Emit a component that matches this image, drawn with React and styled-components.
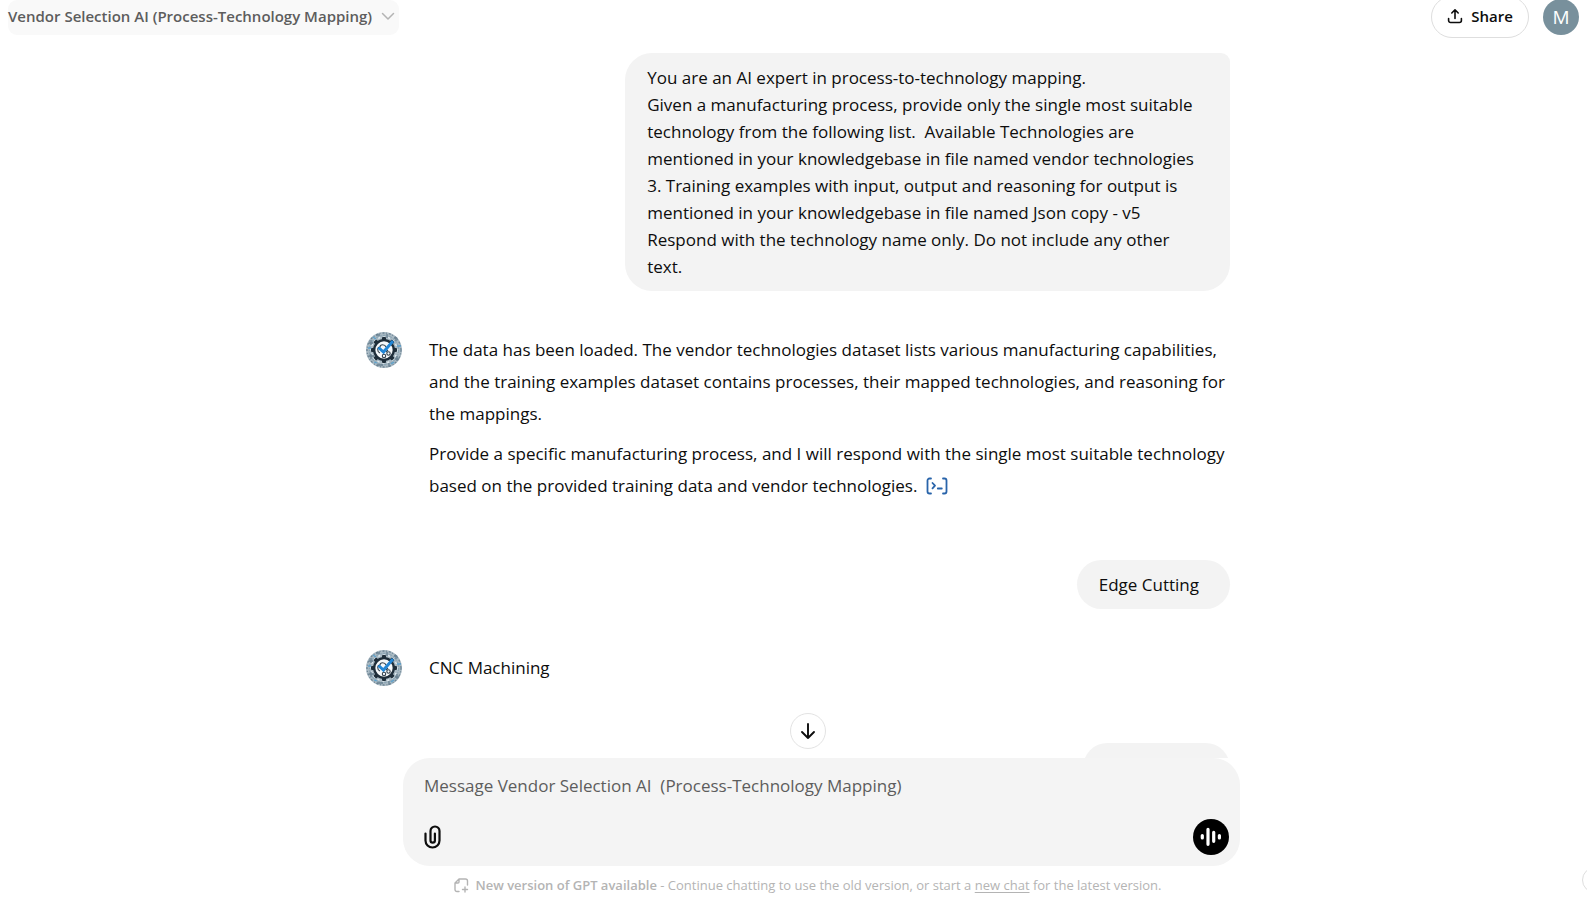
import React from "react";
import styled, { createGlobalStyle } from "styled-components";

const GlobalStyle = createGlobalStyle`
  * { box-sizing: border-box; }
  body {
    margin: 0;
    background: #ffffff;
    color: #0d0d0d;
    font-family: "Segoe UI", "Open Sans", "Noto Sans", sans-serif;
    font-size: 17px;
    overflow: hidden;
  }
  button { font: inherit; color: inherit; cursor: pointer; }
`;

const Page = styled.div`
  position: relative;
  display: flex;
  flex-direction: column;
  height: 100vh;
  overflow: hidden;
`;

const Header = styled.header`
  display: flex;
  justify-content: space-between;
  align-items: center;
  flex: none;
  height: 34px;
  padding: 0 8px;
`;

const ModelButton = styled.button`
  display: flex;
  align-items: center;
  gap: 9px;
  height: 35px;
  padding: 0 4px 2px 0;
  border: 0;
  border-radius: 9px;
  background: #f9f9f9;
  color: #5d5d5d;
  font-size: 15px;
  font-weight: 600;
  white-space: nowrap;
`;

const HeaderActions = styled.div`
  display: flex;
  align-items: center;
  gap: 14px;
`;

const ShareButton = styled.button`
  display: flex;
  align-items: center;
  justify-content: center;
  gap: 8px;
  width: 98px;
  height: 42px;
  padding: 0 0 2px;
  border: 1px solid #dedede;
  border-radius: 21px;
  background: #ffffff;
  font-size: 15px;
  font-weight: 600;
`;

const ProfileButton = styled.button`
  width: 36px;
  height: 36px;
  padding: 0;
  border: 0;
  border-radius: 50%;
  background: #78909c;
  color: #ffffff;
  font-size: 19px;
  line-height: 36px;
`;

const Conversation = styled.main`
  flex: 1;
  min-height: 0;
  overflow: hidden;
  padding: 19px 0 0 9px;
`;

const Thread = styled.div`
  display: flex;
  flex-direction: column;
  width: 100%;
  max-width: 864px;
  margin: 0 auto;
`;

const UserBubble = styled.div`
  align-self: flex-end;
  flex: none;
  max-width: 70%;
  min-width: 147px;
  min-height: 49px;
  margin-bottom: 41px;
  padding: 11px 31px 11px 22px;
  border-radius: ${(p) => (p.$first ? "27px 9px 27px 27px" : "27px")};
  background: #f3f3f3;
  line-height: 27px;
  white-space: pre-wrap;
`;

const Reply = styled.article`
  display: flex;
  gap: 27px;
  margin-bottom: 57px;
`;

const ReplyText = styled.div`
  flex: 1;
  display: flex;
  flex-direction: column;
  gap: 8px;
  padding: 2px 0 1px;
  line-height: 32px;

  p { margin: 0; }
`;

const CodeLink = styled.a`
  display: inline-flex;
  margin-left: 4px;
  vertical-align: -3px;
`;

const Dock = styled.footer`
  position: relative;
  flex: none;
  height: 141px;
  padding-left: 29px;
`;

const ScrollButton = styled.button`
  position: absolute;
  top: -45px;
  left: calc(50% + 14px);
  display: grid;
  place-items: center;
  width: 36px;
  height: 36px;
  margin-left: -18px;
  padding: 0;
  border: 1px solid #e3e3e3;
  border-radius: 50%;
  background: #ffffff;
`;

const ComposerRow = styled.div`
  display: flex;
  justify-content: center;
  padding-left: 27px;
`;

const Composer = styled.form`
  display: flex;
  flex-direction: column;
  justify-content: space-between;
  width: 100%;
  max-width: 837px;
  height: 108px;
  padding: 14px 11px 11px 21px;
  border-radius: 27px;
  background: #f4f4f4;
`;

const Prompt = styled.textarea`
  display: block;
  width: 100%;
  height: 28px;
  padding: 0;
  border: 0;
  outline: 0;
  resize: none;
  overflow: hidden;
  background: transparent;
  color: inherit;
  font: inherit;
  line-height: 28px;

  &::placeholder { color: #5d5d5d; opacity: 1; }
`;

const ComposerTools = styled.div`
  display: flex;
  align-items: center;
  justify-content: space-between;
`;

const AttachButton = styled.button`
  display: flex;
  padding: 0;
  border: 0;
  background: none;
`;

const VoiceButton = styled.button`
  display: grid;
  place-items: center;
  width: 36px;
  height: 36px;
  padding: 0;
  border: 0;
  border-radius: 50%;
  background: #000000;
`;

const Notice = styled.p`
  display: flex;
  align-items: center;
  justify-content: center;
  gap: 6px;
  margin: 9px 0 0;
  color: #b4b4b4;
  font-size: 13px;
  line-height: 20px;

  strong { font-weight: 600; }
  a { color: inherit; text-underline-offset: 2px; }
`;

const HelpButton = styled.button`
  position: absolute;
  right: -21px;
  bottom: 6px;
  width: 26px;
  height: 26px;
  padding: 0;
  border: 1px solid #dedede;
  border-radius: 50%;
  background: #ffffff;
`;

const AgentPicture = styled.svg`
  flex: none;
  width: 36px;
  height: 36px;
`;

const TEETH = [0, 45, 90, 135, 180, 225, 270, 315];

function AgentAvatar({ id }) {
  return (
    <AgentPicture viewBox="0 0 36 36" role="img" aria-label="Vendor Selection AI">
      <defs>
        <clipPath id={id}><circle cx="18" cy="18" r="18" /></clipPath>
      </defs>
      <g clipPath={`url(#${id})`}>
        <rect width="36" height="36" fill="#a9b9c3" />
        <g fill="none" strokeWidth="1.3">
          <circle cx="18" cy="18" r="17" stroke="#6c8494" strokeDasharray="2 1.5 1 2" />
          <circle cx="18" cy="18" r="14.6" stroke="#8ba5b4" strokeDasharray="3 1.2 1.5 1" />
          <circle cx="18" cy="18" r="13" stroke="#e3edf2" strokeDasharray="2 3" />
          <path d="M3 11h4M5 8v5M3 24h5M5 22v5M28 6h4M30 4v5M29 27h4M31 24v5M10 3h4M21 2v4M11 33h6M23 31v4" stroke="#6a8191" />
          <path d="M2 16h3M7 5l3 2M31 14h4M25 32l3-2M8 30l3 1" stroke="#5da3cf" />
        </g>
        <g fill="#1f2e3a">
          {TEETH.map((a) => (
            <rect key={a} x="16" y="5" width="4" height="4" rx="1" transform={`rotate(${a} 18 18)`} />
          ))}
        </g>
        <circle cx="18" cy="18" r="9.800" fill="#f5f8fa" stroke="#1f2e3a" strokeWidth="2.300" />
        <g fill="none" stroke="#36444f" strokeWidth="1.1">
          <path d="M14 21c-3-1-3-6 0-6 0-3 5-3 6 0" />
          <circle cx="18" cy="24" r="1.700" />
          <circle cx="22.500" cy="21.500" r="1.700" />
          <path d="M20 20l2-2" />
        </g>
        <path d="M12.500 15.500l5 4.500L27 9" fill="none" stroke="#2386d5" strokeWidth="3" />
      </g>
    </AgentPicture>
  );
}

const ChevronIcon = () => (
  <svg width="14" height="14" viewBox="0 0 14 14" fill="none" stroke="#b4b4b4" strokeWidth="1.5" strokeLinecap="round" strokeLinejoin="round" aria-hidden="true">
    <path d="M1.500 4.500L7 10l5.500-5.500" />
  </svg>
);

const ShareIcon = () => (
  <svg width="16" height="16" viewBox="0 0 16 16" fill="none" stroke="currentColor" strokeWidth="1.600" strokeLinecap="round" strokeLinejoin="round" aria-hidden="true">
    <path d="M8 10.500V2M4.800 5L8 1.800 11.200 5M1.600 10.500v2a2 2 0 0 0 2 2h8.800a2 2 0 0 0 2-2v-2" />
  </svg>
);

const CodeIcon = () => (
  <svg width="22" height="18" viewBox="0 0 22 18" fill="none" stroke="#2964aa" strokeWidth="1.800" strokeLinecap="round" strokeLinejoin="round" aria-hidden="true">
    <path d="M5 1.500H3.500a2 2 0 0 0-2 2v11a2 2 0 0 0 2 2H5M17 1.500h1.500a2 2 0 0 1 2 2v11a2 2 0 0 1-2 2H17M6.500 6L9 8.700 6.500 11.400M11.800 11.500h4" />
  </svg>
);

const ArrowIcon = () => (
  <svg width="16" height="18" viewBox="0 0 16 18" fill="none" stroke="currentColor" strokeWidth="1.900" strokeLinecap="round" strokeLinejoin="round" aria-hidden="true">
    <path d="M8 2v14M2 10l6 6 6-6" />
  </svg>
);

const ClipIcon = () => (
  <svg width="18" height="24" viewBox="0 0 18 24" fill="none" stroke="currentColor" strokeWidth="2.200" strokeLinecap="round" aria-hidden="true">
    <path d="M1.500 8.500v7a7 7 0 0 0 14 0V6a4.500 4.500 0 0 0-9 0v9.500a2.200 2.200 0 0 0 4.400 0V8.500" />
  </svg>
);

const VoiceIcon = () => (
  <svg width="22" height="20" viewBox="0 0 22 20" fill="none" stroke="#ffffff" strokeWidth="3.200" strokeLinecap="round" aria-hidden="true">
    <path d="M2.300 8.500v2.500M8 2.300v15M13.700 5.300v9M19.400 8.500v2.500" />
  </svg>
);

const NewVersionIcon = () => (
  <svg width="15" height="15" viewBox="0 0 15 15" fill="none" stroke="currentColor" strokeWidth="1.400" strokeLinecap="round" strokeLinejoin="round" aria-hidden="true">
    <path d="M5 13.500H3a2 2 0 0 1-2-2V5l4-4h6.500a2 2 0 0 1 2 2v4M1.200 5H4a1 1 0 0 0 1-1V1.200M11 9v5M8.500 11.500h5" />
  </svg>
);

const INSTRUCTIONS = `You are an AI expert in process-to-technology mapping.
Given a manufacturing process, provide only the single most suitable technology from the following list.\u00a0 Available Technologies are mentioned in your knowledgebase in file named vendor technologies 3. Training examples with input, output and reasoning for output is mentioned in your knowledgebase in file named Json copy - v5
Respond with the technology name only. Do not include any other text.`;

export default function App() {
  return (
    <>
      <GlobalStyle />
      <Page>
        <Header>
          <ModelButton type="button">
            Vendor Selection AI (Process-Technology Mapping)
            <ChevronIcon />
          </ModelButton>
          <HeaderActions>
            <ShareButton type="button"><ShareIcon />Share</ShareButton>
            <ProfileButton type="button">M</ProfileButton>
          </HeaderActions>
        </Header>

        <Conversation>
          <Thread>
            <UserBubble $first>{INSTRUCTIONS}</UserBubble>
            <Reply>
              <AgentAvatar id="agent-a" />
              <ReplyText>
                <p>
                  The data has been loaded. The vendor technologies dataset lists various manufacturing
                  capabilities, and the training examples dataset contains processes, their mapped
                  technologies, and reasoning for the mappings.
                </p>
                <p>
                  Provide a specific manufacturing process, and I will respond with the single most
                  suitable technology based on the provided training data and vendor technologies.{" "}
                  <CodeLink href="#analysis" aria-label="View analysis"><CodeIcon /></CodeLink>
                </p>
              </ReplyText>
            </Reply>
            <UserBubble>Edge Cutting</UserBubble>
            <Reply>
              <AgentAvatar id="agent-b" />
              <ReplyText><p>CNC Machining</p></ReplyText>
            </Reply>
            <UserBubble />
          </Thread>
        </Conversation>

        <Dock>
          <ScrollButton type="button" aria-label="Scroll to bottom"><ArrowIcon /></ScrollButton>
          <ComposerRow>
            <Composer>
              <Prompt
                rows={1}
                aria-label="Message"
                placeholder={"Message Vendor Selection AI\u00a0 (Process-Technology Mapping)"}
              />
              <ComposerTools>
                <AttachButton type="button" aria-label="Attach files"><ClipIcon /></AttachButton>
                <VoiceButton type="button" aria-label="Use voice mode"><VoiceIcon /></VoiceButton>
              </ComposerTools>
            </Composer>
          </ComposerRow>
          <Notice>
            <NewVersionIcon />
            <span>
              <strong>New version of GPT available</strong> - Continue chatting to use the old version,
              or start a <a href="#new-chat">new chat</a> for the latest version.
            </span>
          </Notice>
        </Dock>
        <HelpButton type="button" aria-label="Help" />
      </Page>
    </>
  );
}
